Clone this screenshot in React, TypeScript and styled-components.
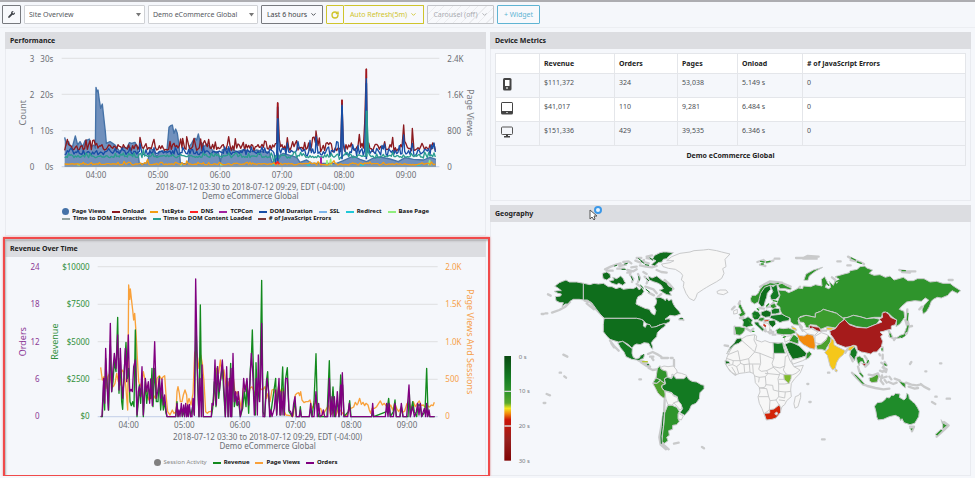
import React from 'react';
import styled, { createGlobalStyle, css } from 'styled-components';
import { ChevronDown, RotateCw } from 'lucide-react';
import { FaWrench } from 'react-icons/fa';

const GlobalStyle = createGlobalStyle`
  * { box-sizing: border-box; }
  body {
    margin: 0;
    background: #f5f7fb;
    color: #222;
    font-family: "Noto Sans", "Open Sans", sans-serif;
    font-size: 7px;
    line-height: 10px;
  }
  button, select { font: inherit; }
  svg { display: block; }
`;

const Page = styled.div`
  border-top: 2px solid #adadb1;
`;

const Toolbar = styled.header`
  display: flex;
  align-items: center;
  gap: 3px;
  height: 26px;
  padding: 0 2px;
  border-bottom: 1px solid #eceef2;
  margin-bottom: 4px;
`;

type Tone = 'dark' | 'yellow' | 'blue' | 'muted';
const tones: Record<Tone, string> = {
  dark: '#3c3f45',
  yellow: '#cfc42c',
  blue: '#5fb4d3',
  muted: '#a9abb0',
};

const ToolButton = styled.button<{ $tone: Tone; $width: number }>`
  display: flex;
  align-items: center;
  justify-content: center;
  gap: 3px;
  height: 19px;
  width: ${p => p.$width}px;
  padding: 0;
  white-space: nowrap;
  color: ${p => tones[p.$tone]};
  background: #f8f9fc;
  border: 1px solid ${p => (p.$tone === 'dark' ? '#77797e' : tones[p.$tone])};
  border-radius: 1px;
  ${p => p.$tone === 'muted' && css`
    background: repeating-linear-gradient(135deg, #f8f9fc 0 5px, #ebecef 5px 6px);
    border-color: #c2c4c8;
  `}
`;

const ButtonGroup = styled.div`
  display: flex;
  ${ToolButton} + ${ToolButton} { border-left: 0; }
`;

const SelectBox = styled.label<{ $width: number }>`
  position: relative;
  width: ${p => p.$width}px;
  svg { position: absolute; right: 4px; top: 8px; pointer-events: none; }
`;

const Select = styled.select`
  appearance: none;
  display: block;
  width: 100%;
  height: 19px;
  padding: 0 4px;
  color: #55585e;
  background: #fff;
  border: 1px solid #cfd1d5;
  border-radius: 1px;
`;

const Dashboard = styled.main`
  display: grid;
  grid-template-columns: 1fr 1fr;
  gap: 4px;
  padding: 0 4px 0 5px;
`;

const Column = styled.div`
  display: flex;
  flex-direction: column;
  gap: 4px;
  min-width: 0;
`;

const Panel = styled.section<{ $marked?: boolean }>`
  position: relative;
  border: 1px solid #e9ebf0;
  border-top: 0;
  ${p => p.$marked && css`
    z-index: 1;
    &::after {
      content: '';
      position: absolute;
      inset: -3px -5px -2px -3px;
      border: 2px solid #f04a4a;
      box-shadow: inset 1px 2px 2px #8888, 0 0 2px #f04a4a88;
      pointer-events: none;
    }
  `}
`;

const PanelTitle = styled.h2`
  position: relative;
  margin: 0 -1px;
  height: 17px;
  padding: 0 5px;
  font-size: 7px;
  line-height: 17px;
  font-weight: 700;
  color: #222;
  background: #dcdde1;
`;

const Pointer = styled.svg`
  position: absolute;
  left: 99px;
  top: 0;
`;

const Drawing = styled.svg`
  width: 100%;
  height: auto;
  font-family: "Noto Sans", "Open Sans", sans-serif;
`;

const Legend = styled.ul<{ $kind: 'rows' | 'single' }>`
  margin: 0;
  list-style: none;
  font-size: 6px;
  line-height: 7px;
  font-weight: 700;
  color: #111;
  padding: ${p => (p.$kind === 'rows' ? '3px 0 13px 56px' : '4px 0 9px 0')};
  ${p => p.$kind === 'single' && css`display: flex; justify-content: center;`}
`;

const LegendRow = styled.li`
  display: flex;
  gap: 6px;
  white-space: nowrap;
`;

const LegendItem = styled.span<{ $off?: boolean }>`
  display: flex;
  align-items: center;
  gap: 3px;
  font-weight: ${p => (p.$off ? 400 : 700)};
  color: ${p => (p.$off ? '#888' : '#111')};
`;

const Swatch = styled.i<{ $color: string; $dot?: boolean }>`
  width: ${p => (p.$dot ? 7 : 8)}px;
  height: ${p => (p.$dot ? 7 : 2)}px;
  border-radius: ${p => (p.$dot ? 4 : 0)}px;
  background: ${p => p.$color};
`;

const TableWrap = styled.div`
  padding: 4px 4px 34px;
`;

const Table = styled.table`
  width: 100%;
  table-layout: fixed;
  border-collapse: collapse;
  border: 1px solid #e4e6ea;
  th, td {
    border: 1px solid #e4e6ea;
    padding: 0 4px;
    text-align: left;
    vertical-align: top;
  }
  thead th { height: 20px; line-height: 19px; background: #fff; }
  tbody th, tbody td { height: 24px; line-height: 18px; color: #4c4f55; font-weight: 400; }
  tbody tr:nth-child(even) { background: #fff; }
  tbody th svg { margin: 3px 0 0; }
  tfoot td { height: 20px; line-height: 19px; text-align: center; font-weight: 700; }
`;

/* ---------- charts (drawn at three units per pixel) ---------- */

const noise = (seed: number) => {
  let s = seed;
  return () => {
    s = (s * 16807) % 2147483647;
    return s / 2147483647;
  };
};

const wobble = (seed: number, base: number, early: number, late: number, spikes: [number, number][]) => {
  const rnd = noise(seed);
  const out: [number, number][] = [];
  for (let x = 194; x <= 1308; x += 4) {
    const amp = x < 800 ? early : late;
    const r = rnd();
    const lift = rnd() > 0.85 ? amp : 0;
    out.push([x, Math.min(498, base + 3 - (r - 0.4) * amp - lift)]);
  }
  for (const [sx, sy] of spikes) {
    const i = Math.round((sx - 194) / 4);
    if (out[i]) out[i] = [sx, sy];
  }
  return out.map(p => p.map(Math.round).join(',')).join(' ');
};

const onload = wobble(41, 441, 18, 28, [[420, 412], [548, 415], [560, 410], [686, 410], [833, 308], [948, 393], [1026, 300], [1094, 370], [1099, 207], [1211, 375], [1237, 385]]);
const domDuration = wobble(77, 456, 12, 24, [[420, 430], [548, 442], [686, 440], [827, 494], [833, 355], [948, 410], [1026, 310], [1099, 235], [1211, 405], [1237, 430]]);
const contentLoaded = wobble(19, 467, 7, 10, [[430, 448], [821, 488], [833, 460], [1018, 478], [1100, 332]]);
const firstByte = wobble(7, 490, 4, 5, [[372, 484], [443, 478], [560, 483], [1002, 482]]);

const viewsTop =
  '194,412 200,435 206,425 212,442 218,438 226,408 233,435 240,425 248,440 255,422 262,420 268,417 274,440 282,435 286,445 288,262 291,275 294,270 298,300 302,325 307,312 311,350 316,395 319,430 330,425 338,430 345,435 352,445 360,455 370,442 380,445 388,428 395,430 405,427 412,440 418,490 430,492 440,488 445,475 450,445 460,450 470,470 480,455 490,452 500,460 507,382 512,377 517,375 522,400 527,387 532,400 537,435 541,488 548,490 560,492 566,480 568,440 575,430 580,420 585,415 590,420 595,402 600,425 606,430 612,440 620,432 630,440 640,455 655,455 661,488 667,450 690,445 710,455 730,450 750,455 770,450 790,456 808,456 815,485 830,492 840,465 850,460 870,466 890,472 900,487 920,480 935,490 970,490 1010,490 1030,482 1045,475 1060,468 1080,478 1100,485 1120,474 1140,471 1170,477 1195,485 1215,473 1240,478 1270,480 1290,472 1308,478';

const orders =
  '302,545 306,543 311,430 314,505 317,340 320,430 325,525 331,265 335,470 339,400 343,355 348,400 353,300 357,465 361,340 365,440 368,490 372,430 376,340 380,440 385,300 389,470 393,463 397,470 401,395 406,375 411,540 415,470 418,455 422,485 426,395 430,540 436,430 440,470 445,440 449,505 452,432 457,512 464,320 469,490 473,470 478,430 482,490 486,432 490,510 494,480 498,525 501,545 527,545 531,505 534,545 537,525 540,545 544,505 547,543 551,510 554,545 557,505 560,545 563,510 565,545 568,508 572,545 576,545 579,490 583,540 587,132 592,400 597,545 600,430 604,545 606,390 610,545 634,545 636,505 640,510 645,375 649,510 653,395 658,470 663,420 667,375 671,440 676,545 680,395 684,545 688,430 691,545 693,400 695,545 699,355 703,500 707,470 711,510 715,470 721,545 726,520 731,430 735,470 741,430 746,510 750,440 754,355 758,410 763,540 769,430 772,540 775,360 779,500 782,430 785,265 789,545 794,545 801,430 806,470 809,545 813,525 816,545 823,520 827,465 830,540 837,430 840,540 843,470 846,540 850,470 853,540 857,430 862,430 867,525 872,530 877,545 881,505 885,485 889,545 898,545 901,525 904,545 928,545 932,505 936,545 942,545 948,470 952,545 956,505 960,545 966,540 970,525 974,545 983,545 988,430 992,545 996,485 999,545 1003,485 1007,545 1012,470 1017,545 1022,450 1024,540 1027,413 1032,545 1043,545 1048,505 1052,545 1115,545 1118,505 1121,545 1156,545 1160,505 1164,545 1167,505 1171,545 1180,545 1185,505 1189,545 1200,545 1204,505 1209,545 1220,545 1227,450 1231,545 1238,515 1243,545 1249,530 1253,505 1257,540 1261,505 1265,545 1273,520 1277,545 1280,505 1283,545 1287,525 1290,545 1304,545';

const revenue =
  '302,545 307,545 311,445 314,525 317,370 321,440 326,525 331,330 335,470 339,440 343,380 348,410 353,247 357,475 361,370 365,500 368,523 373,400 378,322 382,430 386,400 390,500 394,512 398,500 402,515 406,285 411,545 415,500 418,450 422,505 426,430 430,545 436,440 440,505 445,460 449,470 452,490 456,400 459,515 464,400 469,500 474,500 478,425 482,525 486,470 490,525 494,500 498,535 501,545 527,545 531,500 534,545 544,520 547,545 557,515 560,545 568,520 572,545 579,510 583,540 588,260 593,450 597,545 601,210 605,500 607,420 610,545 634,545 638,520 643,440 648,515 652,395 656,490 661,440 667,390 671,470 676,545 681,430 685,545 689,460 692,385 695,545 699,400 703,515 708,485 712,512 716,500 721,545 728,520 733,470 738,515 741,440 746,535 751,400 754,370 757,285 762,470 766,540 768,383 773,500 780,440 785,136 789,530 794,545 799,440 803,410 807,500 811,545 827,430 830,540 836,450 841,540 845,460 848,396 852,540 857,430 862,398 867,530 877,545 885,500 889,545 898,545 901,515 904,545 928,545 932,520 936,545 942,500 948,356 952,520 956,545 981,545 988,377 992,540 996,500 999,456 1004,545 1012,500 1017,545 1022,420 1025,470 1028,450 1032,545 1045,530 1049,497 1053,545 1115,545 1118,530 1121,545 1160,530 1166,490 1171,545 1180,530 1185,495 1189,545 1200,545 1204,515 1209,545 1224,545 1228,475 1231,545 1238,500 1243,530 1250,545 1254,510 1261,510 1265,545 1275,530 1280,400 1284,535 1289,545 1304,545';

const pageViews =
  '302,397 307,435 312,425 318,460 324,425 329,415 335,450 340,455 345,445 350,415 355,440 361,450 366,405 371,410 377,450 383,525 386,150 389,193 391,162 394,190 398,225 401,255 404,235 408,290 412,370 416,440 420,455 426,440 430,410 436,440 442,480 447,495 453,490 460,480 466,490 471,430 478,422 484,432 490,425 494,422 498,480 503,530 510,540 517,525 522,535 528,530 531,470 534,455 538,475 541,500 546,500 550,480 555,465 560,480 562,510 567,490 573,510 579,475 584,355 588,345 593,370 597,400 602,360 607,385 612,440 617,530 622,535 627,530 632,530 636,525 640,500 645,450 650,400 656,415 661,375 667,430 672,405 680,470 687,440 692,480 700,430 706,480 712,470 718,490 724,520 730,460 738,450 745,480 750,460 756,455 762,470 768,480 774,450 780,460 788,465 795,455 800,490 804,475 810,500 816,465 821,463 826,475 831,485 836,455 842,470 848,460 853,530 858,540 870,542 880,543 886,480 891,475 896,473 899,482 902,470 906,495 912,503 918,500 924,500 930,495 936,520 942,510 948,500 955,525 962,520 968,540 974,530 980,520 986,510 992,540 1000,530 1008,540 1016,520 1024,530 1032,540 1040,542 1046,530 1053,520 1061,516 1066,502 1071,510 1074,505 1079,490 1084,508 1089,502 1094,512 1098,505 1104,510 1108,525 1112,535 1116,520 1124,520 1130,515 1136,505 1141,498 1147,510 1153,505 1160,515 1166,522 1172,510 1178,525 1184,505 1190,520 1196,530 1202,520 1208,532 1214,528 1221,505 1228,510 1234,520 1240,500 1246,515 1252,505 1258,498 1264,512 1270,510 1276,517 1282,512 1288,516 1294,510 1299,512 1303,502';

interface Tick { at: number; text: string }

const Label = ({ x, y, children, fill = '#6b6e74', anchor = 'middle', size = 24 }: {
  x: number; y: number; children: React.ReactNode; fill?: string; anchor?: 'start' | 'middle' | 'end'; size?: number;
}) => <text x={x} y={y} fill={fill} textAnchor={anchor} fontSize={size}>{children}</text>;

const AxisTitle = ({ x, y, turn, fill, children }: { x: number; y: number; turn: number; fill: string; children: string }) => (
  <text transform={`translate(${x} ${y}) rotate(${turn})`} textAnchor="middle" fontSize={27} fill={fill}>{children}</text>
);

const Grid = ({ rows, from, to, ticks, labelY }: { rows: number[]; from: number; to: number; ticks: Tick[]; labelY: number }) => {
  const base = rows[rows.length - 1];
  return (
    <g>
      {rows.map(y => <path key={y} d={`M${from} ${y}H${to}`} stroke={y === base ? '#ccd6eb' : '#e3e4e6'} strokeWidth={4} />)}
      {ticks.map(t => (
        <g key={t.text}>
          <path d={`M${t.at} ${base}v12`} stroke="#ccd6eb" strokeWidth={3} />
          <Label x={t.at} y={labelY}>{t.text}</Label>
        </g>
      ))}
    </g>
  );
};

const hours = ['04:00', '05:00', '06:00', '07:00', '08:00', '09:00'];

const Line = ({ points, color }: { points: string; color: string }) => (
  <polyline points={points} fill="none" stroke={color} strokeWidth={4} strokeLinejoin="round" />
);

const PerformanceChart = () => (
  <Drawing viewBox="18 147 1437 468" role="img" aria-label="Performance chart">
    <Grid rows={[175, 283, 392, 500]} from={185} to={1318} labelY={534}
      ticks={hours.map((text, i) => ({ text, at: 288 + i * 186 }))} />
    {['3', '2', '1', '0'].map((t, i) => <Label key={t} x={103} y={186 + i * 108} anchor="end">{t}</Label>)}
    {['30s', '20s', '10s', '0s'].map((t, i) => <Label key={t} x={160} y={186 + i * 108} anchor="end">{t}</Label>)}
    {['2.4K', '1.6K', '800', '0'].map((t, i) => <Label key={t} x={1342} y={186 + i * 108} anchor="start">{t}</Label>)}
    <AxisTitle x={77} y={338} turn={-90} fill="#777a80">Count</AxisTitle>
    <AxisTitle x={1401} y={338} turn={90} fill="#777a80">Page Views</AxisTitle>
    <polygon points={`194,500 ${viewsTop} 1308,500`} fill="#7090bd" />
    <Line points={viewsTop} color="#4572a7" />
    <Line points={onload} color="#8b1a1f" />
    <Line points={domDuration} color="#174ea6" />
    <Line points={contentLoaded} color="#2a9d8f" />
    <path d="M833 320V490M1026 320V478M1099 250V478" stroke="#174ea6" strokeWidth={5} />
    <path d="M833 308V355M1026 300v14M1099 207v28" stroke="#a3161c" strokeWidth={5} />
    <path d="M1100 332V470" stroke="#2a9d8f" strokeWidth={6} />
    <path d="M963 500v-28" stroke="#a020a0" strokeWidth={6} />
    <path d="M978 498l3-18 3 18M988 498l4-22 3 22M1285 498l4-18 4 18" stroke="#90ee7e" strokeWidth={4} fill="none" />
    <path d="M194 498H1308" stroke="#8898a8" strokeWidth={4} />
    <path d="M815 494h12M1080 495h14M1250 495h12M920 495h10" stroke="#1fc8d8" strokeWidth={5} />
    <path d="M232 494h8M660 494h8M540 494h6" stroke="#90ee7e" strokeWidth={5} />
    <Line points={firstByte} color="#f39c12" />
    <path d="M826 492l7-6 5 6" stroke="#f22" strokeWidth={5} fill="none" />
    <Label x={751} y={570}>2018-07-12 03:30 to 2018-07-12 09:29, EDT (-04:00)</Label>
    <Label x={751} y={598}>Demo eCommerce Global</Label>
  </Drawing>
);

const RevenueChart = () => (
  <Drawing viewBox="18 66 1437 594" role="img" aria-label="Revenue over time chart">
    <Grid rows={[95, 208, 320, 433, 545]} from={293} to={1313} labelY={579}
      ticks={hours.map((text, i) => ({ text, at: 386 + i * 167 }))} />
    {['24', '18', '12', '6', '0'].map((t, i) => <Label key={t} x={119} y={105 + i * 112} anchor="end" fill="#8c3a96">{t}</Label>)}
    {['$10000', '$7500', '$5000', '$2500', '$0'].map((t, i) => <Label key={t} x={269} y={105 + i * 112} anchor="end" fill="#2f8f3a">{t}</Label>)}
    {['2.0K', '1.5K', '1.0K', '500', '0'].map((t, i) => <Label key={t} x={1336} y={105 + i * 112} anchor="start" fill="#f5a04a">{t}</Label>)}
    <AxisTitle x={77} y={320} turn={-90} fill="#8c3a96">Orders</AxisTitle>
    <AxisTitle x={173} y={320} turn={-90} fill="#2f8f3a">Revenue</AxisTitle>
    <AxisTitle x={1401} y={320} turn={90} fill="#f5a04a">Page Views And Sessions</AxisTitle>
    <Line points={pageViews} color="#f9a13a" />
    <Line points={revenue} color="#138a1e" />
    <Line points={orders} color="#800080" />
    <Label x={803} y={615}>2018-07-12 03:30 to 2018-07-12 09:29, EDT (-04:00)</Label>
    <Label x={803} y={643}>Demo eCommerce Global</Label>
  </Drawing>
);

/* ---------- world map ---------- */

const none = '#f7f7f7';
const dark = '#0f6e1c';
const deep = '#137a22';
const mid = '#2f942c';
const light = '#4ba12d';

type Shape = [string, string];

const west: Shape[] = [
  [none, '516,102 540,98 552,92 530,92 545,80 570,70 600,66 612,62 640,60 656,58 680,62 695,66 720,72 705,88 708,110 698,116 702,130 695,145 680,155 660,166 650,172 640,178 622,190 618,202 612,212 598,205 588,190 580,170 582,156 574,150 578,136 572,128 556,118 535,115 520,110'],
  [none, '682,184 690,180 708,180 714,187 700,194 684,191'],
  [dark, '195,168 208,158 218,154 228,150 238,156 260,156 281,160 281,210 268,208 250,208 240,214 234,222 226,222 216,230 220,218 210,218 198,212 196,200 212,198 214,192 204,190 192,184 204,182 214,182 204,174'],
  [dark, '281,160 300,164 312,160 325,162 340,160 355,170 366,170 378,176 390,172 400,178 420,175 430,176 440,170 448,180 455,172 462,184 455,195 444,200 440,210 438,222 450,228 465,235 478,238 485,250 494,255 498,242 492,230 498,222 500,212 496,204 510,202 520,206 526,212 530,204 536,212 545,208 550,222 556,232 568,245 572,252 555,258 540,256 525,268 540,266 538,276 525,282 510,284 498,290 488,294 478,290 475,284 468,280 458,270 440,265 343,265 330,252 318,236 305,218 292,210 281,210'],
  [dark, '343,265 440,265 454,268 462,274 460,288 466,292 470,282 480,284 484,292 498,290 512,284 524,280 526,288 512,298 502,308 500,320 490,330 484,338 488,350 488,358 482,352 476,340 462,338 450,344 440,342 432,346 426,355 416,344 406,338 398,334 386,336 372,332 360,328 350,318 340,305 340,285'],
  [deep, '384,338 398,334 408,342 416,348 427,356 426,370 430,382 438,386 448,384 452,376 464,374 460,386 452,388 447,392 440,390 425,388 408,380 402,366 392,354'],
  [dark, '338,130 350,126 360,132 362,142 350,150 340,146'],
  [dark, '358,152 372,150 368,142 380,146 392,138 400,146 404,156 408,158 398,166 386,160 380,164 366,160'],
  [dark, '476,138 486,144 500,138 515,150 530,158 536,168 548,174 546,184 538,186 544,196 530,194 520,188 508,180 520,176 514,166 505,160 490,155 478,150'],
  [dark, '494,76 510,68 520,66 530,66 550,68 535,80 530,86 520,88 516,96 504,98 494,108 484,104 498,92 488,88'],
  [none, '512,412 522,408 534,410 550,408 560,420 562,428 552,436 546,432 545,445 534,442 530,424 518,420'],
  [none, '562,428 574,430 590,436 584,446 558,446 552,436'],
  [mid, '510,408 512,416 518,420 530,424 532,440 524,446 524,460 512,452 498,444 500,430 502,416'],
  [mid, '498,444 512,450 500,460 490,458'],
  [light, '512,452 524,460 514,468 518,478 524,482 526,492 524,506 512,498 503,488 495,472 488,460 500,460'],
  [deep, '524,446 532,442 545,446 550,436 558,446 582,446 590,438 596,448 606,454 620,456 634,464 642,466 642,476 630,488 628,506 618,520 604,526 598,540 584,556 570,548 578,536 572,524 564,512 562,500 550,494 546,488 532,484 524,482 516,474 516,466 526,462'],
  [none, '526,484 534,486 546,490 550,498 562,502 564,514 552,518 546,526 534,524 528,508'],
  [none, '552,518 566,514 574,524 576,534 570,540 562,530'],
  [none, '566,550 580,558 574,570 564,566'],
  [mid, '534,526 546,526 560,532 568,544 564,552 564,566 568,574 560,584 548,586 548,598 536,602 538,616 530,622 534,632 524,640 516,636 518,610 522,580 524,550'],
];

const east: Shape[] = [
  [none, '66,326 80,318 104,314 110,318 108,330 125,336 135,332 150,338 162,338 190,340 196,356 204,376 210,392 222,410 250,406 240,430 224,446 214,460 212,480 214,500 200,512 194,524 186,530 180,548 166,564 140,568 134,556 126,536 118,520 114,500 120,486 118,472 106,458 104,438 100,430 88,426 76,428 60,430 48,434 36,428 24,414 16,400 20,384 28,366 40,346'],
  [none, '222,520 226,500 236,496 242,488 242,502 238,516 234,530 226,534'],
  [mid, '92,205 96,196 108,196 114,190 120,178 130,166 142,162 150,158 164,160 175,156 180,162 160,166 140,170 128,185 124,200 116,215 104,222 94,216'],
  [dark, '118,205 122,190 134,172 150,166 152,178 142,190 140,202 136,212 132,228 124,230 116,220'],
  [deep, '152,166 160,170 170,162 174,182 178,198 168,208 154,210 150,198 158,186'],
  [mid, '174,164 186,160 200,168 214,174 212,180 196,176 180,176'],
  [mid, '60,220 66,232 70,240 76,250 74,256 62,260 56,254 64,248 62,238 56,232'],
  [none, '42,242 52,238 52,250 42,252'],
  [mid, '44,290 58,290 76,294 74,302 68,310 60,316 48,314'],
  [deep, '66,268 78,264 84,260 98,270 94,278 98,286 80,292 68,288 70,276'],
  [deep, '96,250 104,242 116,246 122,256 116,268 104,270 98,262'],
  [dark, '124,246 140,240 154,246 152,260 136,262 124,256'],
  [deep, '154,240 164,234 178,236 180,248 166,252 156,252'],
  [mid, '152,224 164,220 170,230 160,236 152,232'],
  [deep, '154,256 172,254 186,252 196,258 210,262 206,272 190,274 180,278 170,272 160,268 150,264'],
  [dark, '146,272 164,270 168,282 158,292 148,284'],
  [deep, '104,276 116,276 118,284 132,298 128,304 116,292 106,284'],
  [mid, '118,264 130,262 134,268 126,274 116,272'],
  ['#e0431f', '132,270 148,268 146,274 134,276'],
  [none, '132,278 144,280 150,290 148,304 140,306 136,292'],
  [mid, '168,300 178,294 190,296 206,294 222,300 228,308 212,314 190,314 172,312'],
  [mid, '176,206 180,195 174,180 196,182 206,188 220,182 236,174 248,176 250,168 272,170 286,164 306,168 304,148 314,140 322,156 316,172 326,176 332,172 328,154 340,166 346,150 350,160 358,148 345,140 372,132 388,128 390,122 412,118 420,110 434,108 440,114 458,120 448,130 462,136 480,134 496,142 510,138 522,150 550,142 564,152 580,152 592,146 612,146 630,156 650,154 668,160 690,160 700,168 722,182 712,190 696,182 688,190 684,196 664,204 652,202 640,208 634,214 628,230 620,244 610,252 606,240 612,226 626,210 616,204 604,214 584,212 560,216 544,230 538,238 552,244 554,262 540,282 528,290 530,270 518,262 504,248 490,246 484,262 462,262 440,266 420,260 400,256 384,262 368,264 350,250 340,246 330,244 310,238 302,244 286,250 286,262 258,256 240,260 234,272 238,286 222,284 212,276 210,264 196,258 186,252 180,240 180,232 170,224'],
  [mid, '252,150 258,132 280,120 308,112 286,124 268,138 264,150'],
  ['#3c9c2e', '236,264 258,256 286,262 286,250 302,244 310,238 330,244 350,250 368,264 374,268 358,280 346,294 322,290 302,298 290,286 270,284 266,294 258,292 252,278 240,276'],
  [mid, '374,264 384,262 400,256 420,260 440,266 462,264 480,268 470,282 440,294 410,290 388,282 372,270'],
  ['#a51b1b', '330,302 346,296 358,280 374,268 388,284 410,292 440,294 470,282 486,276 478,268 488,262 486,250 496,246 506,252 512,262 530,270 526,284 514,288 514,298 502,300 490,304 480,306 488,314 482,320 488,334 484,350 470,366 460,366 452,372 436,368 424,366 412,360 410,348 400,346 390,350 376,352 350,342 340,324 332,314'],
  ['#a51b1b', '268,286 284,290 298,292 304,306 290,302 278,294 270,296'],
  [none, '250,300 262,298 274,296 294,306 284,316 264,312'],
  ['#f5c71a', '320,292 342,294 334,300 322,300'],
  [none, '286,318 304,308 322,314 326,318 316,330 302,342 286,338'],
  ['#f28a0c', '228,308 238,316 252,318 262,312 280,316 284,330 286,348 284,358 268,354 258,348 250,344 238,332'],
  [light, '290,346 304,342 318,330 324,316 334,324 330,340 322,350 316,362 304,358 292,358'],
  ['#f5c71a', '334,324 342,332 342,344 352,350 376,362 370,374 358,384 350,398 346,414 338,420 330,408 326,392 322,376 314,368 326,354 326,344 332,336'],
  ['#f5c71a', '386,352 404,346 400,356 392,362 384,360'],
  ['#f5c71a', '346,416 352,420 350,426 346,424'],
  [mid, '208,332 220,314 230,322 236,332 234,342 222,338'],
  [none, '194,320 208,318 216,316 208,330 196,336'],
  [dark, '196,342 210,336 222,340 238,348 250,360 260,370 258,378 240,384 218,388 206,368'],
  [none, '214,390 240,384 258,378 264,384 248,392 220,402'],
  [mid, '260,370 268,364 276,372 266,384 258,388'],
  [deep, '160,338 174,340 188,338 190,350 196,370 162,370'],
  [dark, '42,340 50,326 64,324 66,332 56,340 44,344 28,360 20,372 30,352'],
  [dark, '16,392 26,394 30,400 18,402'],
  ['#7fba2c', '192,434 214,434 213,446 207,461 193,449'],
  ['#d32408', '133,550 149,549 149,539 162,537 178,524 182,534 182,547 168,564 156,568 140,570'],
  [none, '165,550 170,546 174,551 169,555'],
  [deep, '392,362 404,350 412,366 410,376 406,382 404,392 398,384 390,374'],
  [mid, '410,382 418,378 430,386 432,394 420,396 418,408 412,396'],
  ['#a51b1b', '426,400 440,400 434,408'],
  [mid, '398,430 408,434 424,450 436,464 426,462 412,446'],
  [light, '448,444 460,440 472,432 476,440 472,456 456,458 450,454'],
  [mid, '536,452 546,456 556,460 556,474 546,466'],
  ['#1f8c2a', '464,528 472,518 486,516 494,510 500,502 508,504 514,496 522,496 526,490 540,492 538,502 552,510 558,504 560,490 566,494 568,506 576,514 584,520 592,532 598,544 596,560 584,580 570,584 552,578 546,566 542,572 538,562 526,556 508,560 490,568 474,570 470,560 468,546'],
  [mid, '570,594 580,594 576,604'],
  [mid, '664,570 670,580 682,586 668,598 668,586'],
  [mid, '664,598 668,602 652,618 646,614'],
  [mid, '508,308 514,312 516,322 510,322'],
  [mid, '562,292 560,304 554,318 540,324 526,326 540,316 552,312 558,296'],
];

const westLines =
  'M240 216L226 230L208 240L186 248M155 252h6M166 250h6M174 193l8 4M284 212L300 216L320 240L342 262M290 220L312 238M360 332L372 348L386 362M364 340l8 12M446 392L460 394L474 402L476 414L488 420L500 418M452 396l18 12M474 372L488 366L504 374L514 380M480 380h10M514 384L534 384M542 384h6M552 390v20M568 268h10M574 264l6 6M345 118L362 110L378 104L392 100M350 122h18M382 116h20M388 108L408 104M400 96L416 94L424 100M424 112L440 110M412 120L430 124L440 118M436 92L452 98L462 90M440 84h14M450 106L468 110L486 112L500 108M462 96L476 100M470 80L486 76M470 84L490 88M420 134L430 146L426 156M412 128h10M444 132L450 144L444 156M460 126L470 132M464 140l10 10l-4 10M440 162L452 170M466 170L490 178L500 190M476 188l16 8M500 120L514 126L530 128M524 150L540 164L550 176M504 200L514 192M519 560L512 600L508 622L512 644L528 658M524 510L522 550M516 640L536 658M512 620l8 22M552 641L566 638M636 651l6 4M220 374l12 6M209 428h4M223 439l5 4M170 492l10 4M161 519h5M448 448h5M490 390l-4-6M470 398l10 12';

const westGreen =
  'M374 108l6-2M404 102l8-2M396 118h10M454 94l8 6M446 86l10 8M466 104l10 2M480 84l8 6M424 140l4 10M446 140l2 10M470 146l6 6M452 166l8 8M468 178l10 8M520 548L517 590L513 620L514 640M570 266h8M530 272h8M472 404h4M455 378l6-4';

const eastLines =
  'M66 332L98 360L104 366L86 386L60 392L54 362L24 374M104 316L102 330L110 346L104 366L120 370L160 386V370M162 338V384L156 400L160 412L140 422L124 424L116 418L122 400L120 370M160 410L180 414L194 408L196 380L204 376M194 408L190 420L198 432L214 436L228 430L240 420L222 410M192 434L180 430L160 412M180 430L174 446L176 462L194 462L206 460M192 448L178 448M176 462L176 484L160 480L158 466L138 464L134 472L118 474M138 464L136 440L144 430L140 422M136 430L176 434M118 474L140 476L146 500L116 500M146 500L150 512L168 510L176 500L176 484L196 486L212 484M196 486L194 504L176 500M150 512L148 540L134 550M168 510L178 526M178 510L194 512M60 392L40 392L22 386M40 392L38 404L26 406M60 392L62 400L50 410L38 404M86 386L88 402L72 404L62 400M88 402L120 402M72 404L74 426M88 402L90 426M50 410L56 430M98 404L100 430M104 438L118 442L136 440M118 442L116 456M36 412L48 432';

const eastCoast =
  'M112 96L130 90L140 98L160 92M120 104l16 4M164 86h14M228 84L250 84L262 78L296 80M250 86h40M384 80L400 88L420 96L432 102M392 90L410 94M352 94h10M382 106h10M538 120L560 124L586 124M546 126L570 128M686 150h12M562 238L560 262L566 284M556 270L562 290M568 290l8-2M598 238l8-8M506 302L518 324L508 318M546 322L560 310L566 290M526 324L522 330M478 372l2 4M488 352v10M488 374v12M484 398L494 404L488 412L500 418L498 426L490 422M494 396l6 10M480 422L488 426M414 410L418 424L428 440M436 410L446 400L440 386L434 378M440 402l6-6M396 428L410 444L430 464L438 466M442 468L466 474L490 478L508 476M446 434L458 436L474 430L478 440M486 436L482 452L490 462M486 444L500 440M494 450l6 8M508 440l6 8M506 456L520 462L530 458M524 446L540 452M558 458L574 464L590 466L600 464M566 470L584 476L594 474M602 462L612 470L628 478M636 516l10 6M680 506h10M646 500h4M570 590h12l-6 14M672 576L686 586L674 598L650 620M36 238L44 230M56 222L60 214M70 262L60 264M44 290L44 312M80 296L92 304L100 296M124 290l12 14M140 300L150 310L160 306M152 300l6 10M158 314h8M186 314h6M140 232L150 230L160 218M118 234L132 236M188 160L212 170M120 170L150 154L186 158M222 190L240 170M336 142L346 150M216 290L228 300M240 290L248 302M236 280L246 292M300 302L318 302M14 346L24 348M18 400L30 420L46 434M324 428h4M262 462h3M268 516h4M306 628h8M574 396l-4 6M616 424h3M660 400h4M382 358L376 368M390 376L398 394';

const eastGreen =
  'M122 94l10 2M140 96l10-2M124 102h6M394 84l12 6M412 96l12 4M546 122h10M564 250l-2 20M510 312l3 8M564 288l-4 16M554 316L544 322M486 356v4M420 430l8 8M426 386L432 398M442 398l3-6M494 402l4 4M60 226L66 244M190 322l6-2M140 228l6-6M160 212l10 2M112 236l4 4M100 258h6M86 270l4 6M224 318l8 8M316 156l10 10M350 154l20-8M90 284l6 2M98 304h4';

const stops: [number, string][] = [[0, '#0a4a12'], [20, deep], [34, mid], [45, '#5aa82c'], [50, '#f4e61c'], [55, '#f28a0c'], [61, '#cc1408'], [80, '#97201f'], [100, '#800505']];

const Countries = ({ shapes }: { shapes: Shape[] }) => (
  <g stroke="#c9cacb" strokeWidth={3} strokeLinejoin="round">
    {shapes.map(([fill, points]) => <polygon key={points} fill={fill} points={points} />)}
  </g>
);

const WorldMap = () => (
  <Drawing viewBox="3 -24 1437 759" role="img" aria-label="Onload time by country">
    <defs>
      <linearGradient id="scale" x1="0" y1="0" x2="0" y2="1">
        {stops.map(([at, color]) => <stop key={at} offset={`${at}%`} stopColor={color} />)}
      </linearGradient>
    </defs>
    <g fill="none" strokeLinecap="round" strokeLinejoin="round">
      <path d={westLines} stroke="#c9cacb" strokeWidth={7} />
      <Countries shapes={west} />
      <path d={westGreen} stroke={dark} strokeWidth={3} />
      <path d="M458 395h14" stroke="#b5c92a" strokeWidth={4} />
      <g transform="translate(690 0)">
        <path d={eastCoast} stroke="#c9cacb" strokeWidth={7} />
        <Countries shapes={east.slice(0, 1)} />
        <path d={eastLines} stroke="#c9cacb" strokeWidth={3} />
        <Countries shapes={east.slice(1)} />
        <path d={eastGreen} stroke={mid} strokeWidth={4} />
        <path d="M132 285l4 3" stroke="#cc3020" strokeWidth={5} />
        <path d="M218 294l8 3" stroke="#f5c71a" strokeWidth={4} />
      </g>
    </g>
    <rect x={43} y={378} width={20} height={314} fill="url(#scale)" />
    <path d="M43 484h20M43 588h20" stroke="#d8d8d8" strokeWidth={4} />
    {['0 s', '10 s', '20 s', '30 s'].map((t, i) => (
      <Label key={t} x={86} y={386 + i * 104} anchor="start" size={18} fill="#777a80">{t}</Label>
    ))}
  </Drawing>
);

/* ---------- small parts ---------- */

const Caret = () => <svg width="5" height="4" viewBox="0 0 10 8"><path d="M0 0h10L5 7z" fill="#777" /></svg>;

const PhoneIcon = () => (
  <svg width="14" height="14" viewBox="0 0 28 28">
    <rect x="6" y="2" width="17" height="25" rx="3" fill="#444" />
    <rect x="10" y="6" width="9" height="12" fill="#fff" />
    <circle cx="14" cy="22" r="2" fill="#ccc" />
  </svg>
);
const TabletIcon = () => (
  <svg width="14" height="14" viewBox="0 0 28 28">
    <rect x="2" y="2" width="24" height="25" rx="3" fill="#444" />
    <rect x="4" y="4" width="20" height="16" fill="#fff" />
    <path d="M12 23h4" stroke="#bbb" strokeWidth="2" />
  </svg>
);
const DesktopIcon = () => (
  <svg width="14" height="14" viewBox="0 0 28 28">
    <rect x="3" y="4" width="22" height="15" rx="2" fill="none" stroke="#555" strokeWidth="2" />
    <path d="M12 19h4v3h4v3H8v-3h4z" fill="#444" />
  </svg>
);

const devices = [
  { name: 'Phone', icon: <PhoneIcon />, cells: ['$111,372', '324', '53,038', '5.149 s', '0'] },
  { name: 'Tablet', icon: <TabletIcon />, cells: ['$41,017', '110', '9,281', '6.484 s', '0'] },
  { name: 'Desktop', icon: <DesktopIcon />, cells: ['$151,336', '429', '39,535', '6.346 s', '0'] },
];

type Key = { name: string; color: string; dot?: boolean; off?: boolean };

const performanceKeys: Key[][] = [
  [
    { name: 'Page Views', color: '#4572a7', dot: true },
    { name: 'Onload', color: '#8b1a1f' },
    { name: '1stByte', color: '#f39c12' },
    { name: 'DNS', color: '#f22' },
    { name: 'TCPCon', color: '#a020a0' },
    { name: 'DOM Duration', color: '#174ea6' },
    { name: 'SSL', color: '#7cb5ec' },
    { name: 'Redirect', color: '#1fc8d8' },
    { name: 'Base Page', color: '#90ee7e' },
  ],
  [
    { name: 'Time to DOM Interactive', color: '#94a3a0' },
    { name: 'Time to DOM Content Loaded', color: '#2a9d8f' },
    { name: '# of JavaScript Errors', color: '#7b3a3a' },
  ],
];

const revenueKeys: Key[] = [
  { name: 'Session Activity', color: '#808080', dot: true, off: true },
  { name: 'Revenue', color: '#138a1e' },
  { name: 'Page Views', color: '#f9a13a' },
  { name: 'Orders', color: '#800080' },
];

const Keys = ({ items }: { items: Key[] }) => (
  <LegendRow>
    {items.map(k => (
      <LegendItem key={k.name} $off={k.off}>
        <Swatch $color={k.color} $dot={k.dot} />
        {k.name}
      </LegendItem>
    ))}
  </LegendRow>
);

export default function App() {
  return (
    <Page>
      <GlobalStyle />
      <Toolbar>
        <ToolButton $tone="dark" $width={19} aria-label="Settings"><FaWrench size={7} /></ToolButton>
        <SelectBox $width={121}>
          <Select aria-label="Dashboard"><option>Site Overview</option></Select>
          <Caret />
        </SelectBox>
        <SelectBox $width={110}>
          <Select aria-label="Tenant"><option>Demo eCommerce Global</option></Select>
          <Caret />
        </SelectBox>
        <ToolButton $tone="dark" $width={62}>Last 6 hours <ChevronDown size={7} strokeWidth={3} /></ToolButton>
        <ButtonGroup>
          <ToolButton $tone="yellow" $width={18} aria-label="Refresh"><RotateCw size={8} strokeWidth={4} /></ToolButton>
          <ToolButton $tone="yellow" $width={80}>Auto Refresh(5m) <ChevronDown size={7} strokeWidth={3} /></ToolButton>
        </ButtonGroup>
        <ToolButton $tone="muted" $width={67} disabled>Carousel (off) <ChevronDown size={7} strokeWidth={3} /></ToolButton>
        <ToolButton $tone="blue" $width={43}>+ Widget</ToolButton>
      </Toolbar>
      <Dashboard>
        <Column>
          <Panel>
            <PanelTitle>Performance</PanelTitle>
            <PerformanceChart />
            <Legend $kind="rows">
              {performanceKeys.map(row => <Keys key={row[0].name} items={row} />)}
            </Legend>
          </Panel>
          <Panel $marked>
            <PanelTitle>Revenue Over Time</PanelTitle>
            <RevenueChart />
            <Legend $kind="single"><Keys items={revenueKeys} /></Legend>
          </Panel>
        </Column>
        <Column>
          <Panel>
            <PanelTitle>Device Metrics</PanelTitle>
            <TableWrap>
              <Table>
                <colgroup>
                  <col width="44" /><col width="75" /><col width="63" /><col width="60" /><col width="65" /><col />
                </colgroup>
                <thead>
                  <tr>
                    <th scope="col" aria-label="Device" />
                    {['Revenue', 'Orders', 'Pages', 'Onload', '# of JavaScript Errors'].map(h => <th scope="col" key={h}>{h}</th>)}
                  </tr>
                </thead>
                <tbody>
                  {devices.map(d => (
                    <tr key={d.name}>
                      <th scope="row" aria-label={d.name}>{d.icon}</th>
                      {d.cells.map((c, i) => <td key={i}>{c}</td>)}
                    </tr>
                  ))}
                </tbody>
                <tfoot><tr><td colSpan={6}>Demo eCommerce Global</td></tr></tfoot>
              </Table>
            </TableWrap>
          </Panel>
          <Panel>
            <PanelTitle>
              Geography
              <Pointer width="14" height="16" viewBox="0 0 14 16" aria-hidden="true">
                <path d="M1 5v9l2-2 2 3 1-1-1-3h3z" fill="#fff" stroke="#555" />
                <circle cx="9" cy="5" r="3" fill="#e8f3fc" stroke="#3c98e8" strokeWidth="2" />
              </Pointer>
            </PanelTitle>
            <WorldMap />
          </Panel>
        </Column>
      </Dashboard>
    </Page>
  );
}
